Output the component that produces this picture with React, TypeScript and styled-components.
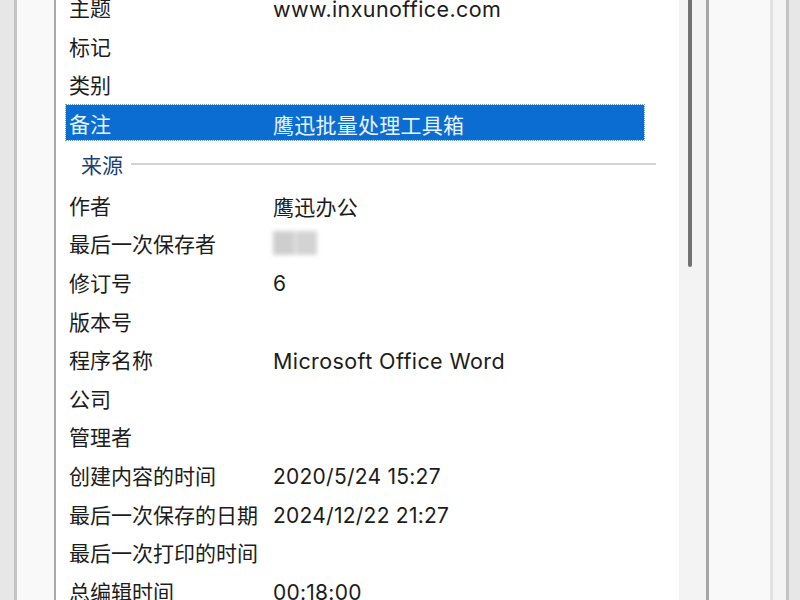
import React from 'react';
import styled, { createGlobalStyle } from 'styled-components';

interface Prop {
  label: string;
  value?: string;
  selected?: boolean;
  blurred?: boolean;
}

const descRows: Prop[] = [
  { label: '主题', value: 'www.inxunoffice.com' },
  { label: '标记' },
  { label: '类别' },
  { label: '备注', value: '鹰迅批量处理工具箱', selected: true },
];

const originRows: Prop[] = [
  { label: '作者', value: '鹰迅办公' },
  { label: '最后一次保存者', blurred: true },
  { label: '修订号', value: '6' },
  { label: '版本号' },
  { label: '程序名称', value: 'Microsoft Office Word' },
  { label: '公司' },
  { label: '管理者' },
  { label: '创建内容的时间', value: '2020/5/24 15:27' },
  { label: '最后一次保存的日期', value: '2024/12/22 21:27' },
  { label: '最后一次打印的时间' },
  { label: '总编辑时间', value: '00:18:00' },
];

const PropRow: React.FC<Prop> = ({ label, value, selected, blurred }) => (
  <Row selected={selected}>
    <Label>{label}</Label>
    <Value latin={!!value && /[a-z]/i.test(value)}>{blurred ? <Smudge /> : value}</Value>
  </Row>
);

const App: React.FC = () => (
  <>
    <GlobalStyle />
    <Window>
      <OuterEdge />
      <EdgeLine />
      <SidePad />
      <ListBox>
        <Rows>
          {descRows.map((r) => (
            <PropRow key={r.label} {...r} />
          ))}
          <Section>
            <SectionTitle>来源</SectionTitle>
            <SectionRule />
          </Section>
          {originRows.map((r) => (
            <PropRow key={r.label} {...r} />
          ))}
        </Rows>
        <ScrollTrack>
          <ScrollThumb />
        </ScrollTrack>
      </ListBox>
      <RightPad />
      <FaintLine />
      <RightStrip />
      <EdgeLine />
      <OuterEdge />
    </Window>
  </>
);

const GlobalStyle = createGlobalStyle`
  html, body {
    margin: 0;
    padding: 0;
    overflow: hidden;
  }
  body {
    font-family: "Noto Sans", "Noto Sans CJK SC", sans-serif;
    color: #1c1c1c;
  }
`;

const Window = styled.div`
  display: flex;
  width: 800px;
  height: 600px;
  overflow: hidden;
  background: #f8f8f8;
`;

const OuterEdge = styled.div`
  flex: 1 0 13px;
  background: #e7e7e7;
  &:last-child {
    flex: 0 0 11px;
  }
`;

const EdgeLine = styled.div`
  flex: 0 0 3px;
  background: #c4c4c4;
`;

const SidePad = styled.div`
  flex: 0 0 37px;
  background: #f9f9f9;
`;

const ListBox = styled.div`
  flex: 0 0 650px;
  display: flex;
  background: #fff;
  border-left: 2px solid #a9a9a9;
  border-right: 3px solid #a6a6a6;
`;

const Rows = styled.div`
  flex: 1;
  padding: 0 0 0 10px;
  margin-top: -10.5px;
`;

const Row = styled.div<{ selected?: boolean }>`
  display: flex;
  align-items: center;
  width: 578px;
  height: 35px;
  margin-bottom: 3.6px;
  padding-left: 3px;
  box-sizing: border-box;
  font-size: 21px;
  white-space: nowrap;
  background: ${(p) => (p.selected ? '#0b6dd1' : 'transparent')};
  color: ${(p) => (p.selected ? '#e6f4ff' : 'inherit')};
  outline: ${(p) => (p.selected ? '1px dotted #6a98cc' : 'none')};
`;

const Label = styled.span`
  flex: 0 0 204px;
`;

const Value = styled.span<{ latin?: boolean }>`
  flex: 1;
  display: flex;
  align-items: center;
  padding-top: 3px;
  font-family: "Inter", "Noto Sans CJK SC", sans-serif;
  font-size: ${(p) => (p.latin ? '21.5px' : '21px')};
  letter-spacing: ${(p) => (p.latin ? '0.4px' : '0.25px')};
`;

const Smudge = styled.span`
  display: inline-block;
  width: 44px;
  height: 24px;
  margin-top: -4px;
  background: linear-gradient(90deg, #c9c9c9 0 45%, #dadada 45% 55%, #cfcfcf 55% 100%);
  filter: blur(2px);
  opacity: 0.9;
`;

const Section = styled.div`
  display: flex;
  align-items: center;
  height: 47px;
  margin-top: -3.6px;
  padding-left: 15px;
`;

const SectionTitle = styled.span`
  font-size: 21px;
  color: #1d3f73;
  margin-right: 8px;
`;

const SectionRule = styled.div`
  width: 525px;
  height: 2px;
  background: #d3d3d3;
`;

const ScrollTrack = styled.div`
  flex: 0 0 27px;
  position: relative;
  background: #f3f3f3;
`;

const ScrollThumb = styled.div`
  position: absolute;
  left: 9px;
  top: 0;
  width: 4px;
  height: 267px;
  border-radius: 0 0 2px 2px;
  background: #727272;
`;

const RightPad = styled.div`
  flex: 0 0 61px;
  background: #f9f9f9;
`;

const FaintLine = styled.div`
  flex: 0 0 3px;
  background: #e2e2e2;
`;

const RightStrip = styled.div`
  flex: 0 0 13px;
  background: #f4f4f4;
`;

export default App;
